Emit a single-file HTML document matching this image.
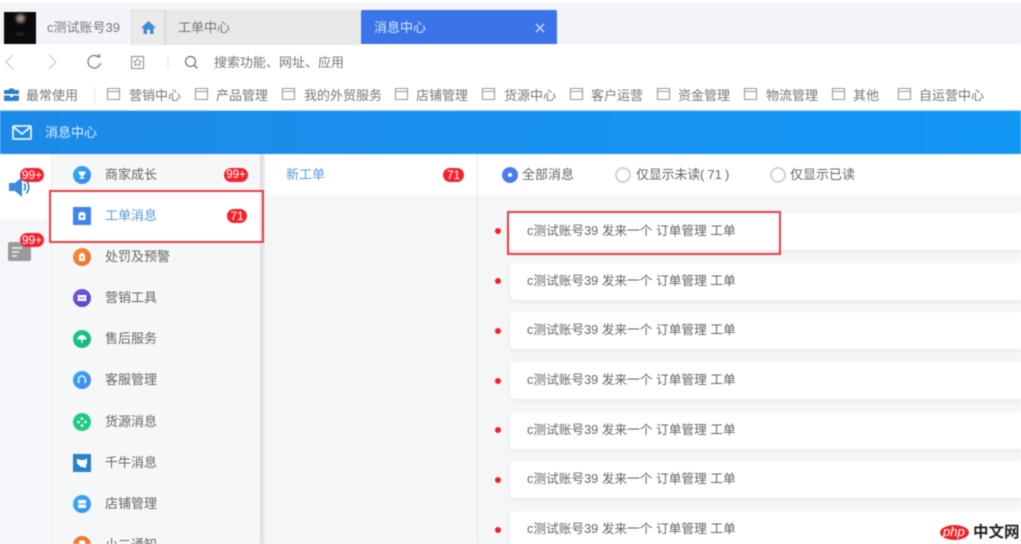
<!DOCTYPE html>
<html lang="zh">
<head>
<meta charset="utf-8">
<style>
html,body{margin:0;padding:0;background:#fff}
#p{position:relative;width:1021px;height:544px;overflow:hidden;background:#fff;font-family:"Liberation Sans","Noto Sans CJK SC",sans-serif;font-size:13px;color:#666;filter:blur(.45px)}
.a{position:absolute}
.t{position:absolute;white-space:nowrap;line-height:18px}
.bk{top:87px;color:#777;font-size:13px}
.m{position:absolute;left:105px;color:#666;font-size:13px;white-space:nowrap;line-height:18px}
.ic{position:absolute;left:73px;width:18px;height:18px;border-radius:50%}
.ic svg{position:absolute;left:0;top:0}
.bd{position:absolute;background:#f5222d;color:#fff;border-radius:8px;text-align:center;font-size:12px;line-height:14px;height:14px}
.card{position:absolute;left:510px;width:511px;height:37px;background:#fff;border-radius:4px 0 0 4px;box-shadow:0 2px 4px rgba(0,0,0,.06)}
.card span{position:absolute;left:17px;top:9px;font-size:12.7px;line-height:18px;color:#666;white-space:nowrap}
.dot{position:absolute;left:495px;width:6px;height:6px;border-radius:50%;background:#f5222d}
.r{position:absolute;top:167px;width:16px;height:16px;border:2px solid #d2d2d2;border-radius:50%;box-sizing:border-box;background:#fff}
</style>
</head>
<body>
<div id="p">
<div class="a" style="left:0;top:3px;width:1021px;height:41px;background:#f2f4f7"></div>
<div class="a" style="left:4px;top:12px;width:32px;height:32px;background:#0a0a0c"></div>
<div class="a" style="left:16px;top:14px;width:9px;height:9px;background:#a08f80;border-radius:50%;filter:blur(1.5px)"></div>
<div class="a" style="left:16px;top:33px;width:8px;height:2px;background:#333;filter:blur(1px)"></div>
<div class="t" style="left:47px;top:19px;font-size:13px;color:#777">c测试账号39</div>
<div class="a" style="left:131px;top:10px;width:34px;height:35px;background:#eaeaea;border:1px solid #ddd;border-bottom:0;box-sizing:border-box"></div>
<svg class="a" style="left:141px;top:20px" width="15" height="14" viewBox="0 0 15 14"><path d="M7.500 1 L15 8 H12.500 V14 H9 V9.500 H6 V14 H2.500 V8 H0 Z" fill="#3d8ad6"/></svg>
<div class="a" style="left:165px;top:10px;width:196px;height:35px;background:#e8e8e8;border-left:1px solid #d8d8d8;box-sizing:border-box"></div>
<div class="t" style="left:178px;top:19px;font-size:13px;color:#777">工单中心</div>
<div class="a" style="left:361px;top:10px;width:196px;height:34px;background:#3a74e8;border-radius:2px 2px 0 0"></div>
<div class="t" style="left:374px;top:19px;font-size:13px;color:#d9e6fb">消息中心</div>
<svg class="a" style="left:535px;top:23px" width="10" height="10" viewBox="0 0 10 10"><path d="M1 1 L9 9 M9 1 L1 9" stroke="#c8dafa" stroke-width="1.400"/></svg>

<svg class="a" style="left:0;top:50px" width="190" height="24" viewBox="0 0 190 24" fill="none">
<path d="M13 5 L6 12 L13 19" stroke="#c4c4c4" stroke-width="1"/>
<path d="M49 5 L56 12 L49 19" stroke="#c4c4c4" stroke-width="1"/>
<path d="M99 7.500 A6.300 6.300 0 1 0 100.500 13" stroke="#888" stroke-width="1.400"/>
<path d="M96 7 L100.500 7.800 L100 3.500" fill="#888"/>
<rect x="131.500" y="6.500" width="12" height="12" stroke="#888"/>
<path d="M137.500 8.500 L138.800 11 L141.300 11.300 L139.500 13 L140 15.500 L137.500 14.300 L135 15.500 L135.500 13 L133.700 11.300 L136.200 11 Z" stroke="#888" stroke-width=".8"/>
<path d="M168 6 V18" stroke="#e5e5e5"/>
</svg>
<svg class="a" style="left:184px;top:55px" width="15" height="15" viewBox="0 0 15 15" fill="none"><circle cx="6.500" cy="6.500" r="5" stroke="#777" stroke-width="1.300"/><path d="M10 10 L13.500 13.500" stroke="#777" stroke-width="1.300"/></svg>
<div class="t" style="left:214px;top:54px;font-size:13px;color:#777">搜索功能、网址、应用</div>

<svg class="a" style="left:4px;top:88px" width="15" height="13" viewBox="0 0 15 13"><path d="M5 2 V0.500 H10 V2 H14 a1 1 0 0 1 1 1 V6 H0 V3 a1 1 0 0 1 1 -1 Z M0 7.500 H6 V9 H9 V7.500 H15 V12 a1 1 0 0 1 -1 1 H1 a1 1 0 0 1 -1 -1 Z" fill="#2d80c8"/></svg>
<div class="t bk" style="left:26px">最常使用</div>
<div class="a" style="left:94px;top:86px;width:1px;height:16px;background:#e3e3e3"></div>
<div class="t bk" style="left:129px">营销中心</div>
<div class="t bk" style="left:216px">产品管理</div>
<div class="t bk" style="left:304px">我的外贸服务</div>
<div class="t bk" style="left:416px">店铺管理</div>
<div class="t bk" style="left:504px">货源中心</div>
<div class="t bk" style="left:591px">客户运营</div>
<div class="t bk" style="left:678px">资金管理</div>
<div class="t bk" style="left:766px">物流管理</div>
<div class="t bk" style="left:853px">其他</div>
<div class="t bk" style="left:919px">自运营中心</div>
<svg class="a" style="left:0;top:87px" width="1021" height="14" viewBox="0 0 1021 14" fill="none" stroke="#999" stroke-width="1.100">
<path d="M107.500 1.500 H119.500 V12.500 H107.500 Z M107.500 4.500 H119.500"/>
<path d="M195.500 1.500 H207.500 V12.500 H195.500 Z M195.500 4.500 H207.500"/>
<path d="M282.500 1.500 H294.500 V12.500 H282.500 Z M282.500 4.500 H294.500"/>
<path d="M395.500 1.500 H407.500 V12.500 H395.500 Z M395.500 4.500 H407.500"/>
<path d="M482.500 1.500 H494.500 V12.500 H482.500 Z M482.500 4.500 H494.500"/>
<path d="M570.500 1.500 H582.500 V12.500 H570.500 Z M570.500 4.500 H582.500"/>
<path d="M657.500 1.500 H669.500 V12.500 H657.500 Z M657.500 4.500 H669.500"/>
<path d="M744.500 1.500 H756.500 V12.500 H744.500 Z M744.500 4.500 H756.500"/>
<path d="M832.500 1.500 H844.500 V12.500 H832.500 Z M832.500 4.500 H844.500"/>
<path d="M898.500 1.500 H910.500 V12.500 H898.500 Z M898.500 4.500 H910.500"/>
</svg>

<div class="a" style="left:0;top:110px;width:1021px;height:44px;background:linear-gradient(90deg,#1e8ae8,#1297f5);border-top:1px solid #a9d6f7;box-sizing:border-box"></div>
<svg class="a" style="left:12px;top:125px" width="20" height="15" viewBox="0 0 20 15" fill="none" stroke="#e8f4fe" stroke-width="1.800"><rect x="1" y="1" width="18" height="13" rx="1"/><path d="M1.500 2 L10 9 L18.500 2"/></svg>
<div class="t" style="left:45px;top:124px;font-size:13px;color:#dcefff">消息中心</div>

<div class="a" style="left:0;top:154px;width:51px;height:390px;background:#f5f6f9"></div>
<div class="a" style="left:0;top:154px;width:51px;height:65px;background:#fff"></div>
<div class="a" style="left:51px;top:154px;width:209px;height:390px;background:#f6f7f9;border-left:1px solid #eceef1;box-sizing:border-box"></div>
<div class="a" style="left:52px;top:192px;width:209px;height:50px;background:#fff"></div>
<div class="a" style="left:260px;top:154px;width:5px;height:390px;background:linear-gradient(90deg,#dcdcdf,#ececee)"></div>
<div class="a" style="left:265px;top:154px;width:212px;height:390px;background:#f5f6f8"></div>
<div class="a" style="left:265px;top:154px;width:212px;height:41px;background:#fff"></div>
<div class="a" style="left:477px;top:154px;width:544px;height:390px;background:#f5f6f8;border-left:1px solid #e6e7ea;box-sizing:border-box"></div>
<div class="a" style="left:478px;top:154px;width:543px;height:41px;background:#fff"></div>

<svg class="a" style="left:8px;top:177px" width="23" height="20" viewBox="0 0 23 20"><path d="M1 6 H7 L14 0 V20 L7 14 H1 Z" fill="#3b8ad6"/><path d="M16 6.500 Q18.500 10 16 13.500 M18.500 3.500 Q23 10 18.500 16.500" stroke="#3b8ad6" stroke-width="1.700" fill="none"/></svg>
<div class="bd" style="left:20px;top:168px;width:24px">99+</div>
<div class="a" style="left:8px;top:242px;width:23px;height:19px;background:#9a9a9a;border-radius:2px"></div>
<div class="a" style="left:12px;top:247px;width:10px;height:2px;background:#ddd"></div>
<div class="a" style="left:12px;top:251px;width:7px;height:2px;background:#ddd"></div>
<div class="a" style="left:12px;top:255px;width:5px;height:2px;background:#ddd"></div>
<div class="bd" style="left:20px;top:233px;width:24px">99+</div>

<div class="ic" style="top:166px;background:linear-gradient(135deg,#2eb6ea,#3a80f0)"><svg width="18" height="18" viewBox="0 0 18 18"><path d="M5 5.500 H13 L11 9.500 H9.800 V11.500 H11.500 V12.800 H6.500 V11.500 H8.200 V9.500 H7 Z" fill="#fff"/></svg></div>
<div class="m" style="top:166px">商家成长</div>
<div class="bd" style="left:224px;top:168px;width:24px;font-size:11.500px">99+</div>
<div class="ic" style="top:207px;border-radius:0;background:#3f86ee"><svg width="18" height="18" viewBox="0 0 18 18"><path d="M5.500 6 H7 V5 H11 V6 H12.500 V13 H5.500 Z" fill="#fff"/><rect x="7.500" y="8.500" width="3" height="2" fill="#3f86ee"/></svg></div>
<div class="m" style="top:207px;color:#5b96e0">工单消息</div>
<div class="bd" style="left:227px;top:209px;width:20px">71</div>
<div class="ic" style="top:248px;background:linear-gradient(135deg,#f0963a,#ee6a30)"><svg width="18" height="18" viewBox="0 0 18 18"><path d="M6 7 L9 4.500 L12 7 V13 H6 Z" fill="#fff"/><rect x="8" y="8.500" width="2" height="2" fill="#ee7a30"/></svg></div>
<div class="m" style="top:248px">处罚及预警</div>
<div class="ic" style="top:289px;background:linear-gradient(135deg,#7b55dc,#4f45c8)"><svg width="18" height="18" viewBox="0 0 18 18"><path d="M4.500 6 H13.500 V8 L12.500 9 L13.500 10 V12 H4.500 V10 L5.500 9 L4.500 8 Z" fill="#fff"/><rect x="7" y="8.300" width="1.500" height="1.500" fill="#6a4cd4"/><rect x="9.500" y="8.300" width="1.500" height="1.500" fill="#6a4cd4"/></svg></div>
<div class="m" style="top:289px">营销工具</div>
<div class="ic" style="top:330px;background:linear-gradient(135deg,#20c880,#18b87e)"><svg width="18" height="18" viewBox="0 0 18 18"><path d="M4.500 9.500 A4.500 4.500 0 0 1 13.500 9.500 Z" fill="#fff"/><path d="M9 9 V13" stroke="#fff" stroke-width="1.200"/></svg></div>
<div class="m" style="top:330px">售后服务</div>
<div class="ic" style="top:371px;background:linear-gradient(135deg,#2eb0f0,#4a80f0)"><svg width="18" height="18" viewBox="0 0 18 18" fill="none"><path d="M5.500 10.500 V8.500 A3.500 3.500 0 0 1 12.500 8.500 V10.500" stroke="#fff" stroke-width="1.200"/><rect x="5" y="9.500" width="1.500" height="2.500" fill="#fff"/><rect x="11.500" y="9.500" width="1.500" height="2.500" fill="#fff"/></svg></div>
<div class="m" style="top:371px">客服管理</div>
<div class="ic" style="top:413px;background:#1fcb85"><svg width="18" height="18" viewBox="0 0 18 18" fill="#fff"><circle cx="9" cy="5.500" r="1.300"/><circle cx="9" cy="12.500" r="1.300"/><circle cx="5.500" cy="9" r="1.300"/><circle cx="12.500" cy="9" r="1.300"/></svg></div>
<div class="m" style="top:413px">货源消息</div>
<div class="ic" style="top:454px;border-radius:0;background:#2a82c8"><svg width="18" height="18" viewBox="0 0 18 18"><path d="M4 4.500 L7 6 H11 L14 4.500 V9.500 L11.500 13 H8 L4 9.500 Z" fill="#fff"/><circle cx="11.500" cy="12" r="1.800" fill="#fff"/></svg></div>
<div class="m" style="top:454px">千牛消息</div>
<div class="ic" style="top:495px;background:linear-gradient(135deg,#2fb4f2,#3f8ef0)"><svg width="18" height="18" viewBox="0 0 18 18" fill="#fff"><rect x="5" y="5" width="8" height="3.500" rx=".5"/><rect x="5" y="9.500" width="8" height="3.500" rx=".5"/></svg></div>
<div class="m" style="top:495px">店铺管理</div>
<div class="ic" style="top:536px;background:#f07a30"><svg width="18" height="18" viewBox="0 0 18 18"><rect x="6" y="4.500" width="6" height="7" rx="1" fill="#fff"/></svg></div>
<div class="m" style="top:536px">小二通知</div>

<div class="t" style="left:286px;top:166px;font-size:13px;color:#5f9ade">新工单</div>
<div class="bd" style="left:443px;top:168px;width:21px">71</div>

<div class="a" style="left:502px;top:167px;width:16px;height:16px;border-radius:50%;background:#4a7cf0"></div>
<div class="a" style="left:508px;top:173px;width:4px;height:4px;border-radius:50%;background:#fff"></div>
<div class="t" style="left:522px;top:166px;font-size:13px;color:#666">全部消息</div>
<div class="r" style="left:615px"></div>
<div class="t" style="left:636px;top:166px;font-size:13px;letter-spacing:-.2px;color:#666">仅显示未读( 71 )</div>
<div class="r" style="left:770px"></div>
<div class="t" style="left:790px;top:166px;font-size:13px;color:#666">仅显示已读</div>

<div class="dot" style="top:228px"></div><div class="card" style="top:213px"><span>c测试账号39 发来一个 订单管理 工单</span></div>
<div class="dot" style="top:278px"></div><div class="card" style="top:263px"><span>c测试账号39 发来一个 订单管理 工单</span></div>
<div class="dot" style="top:328px"></div><div class="card" style="top:312px"><span>c测试账号39 发来一个 订单管理 工单</span></div>
<div class="dot" style="top:378px"></div><div class="card" style="top:362px"><span>c测试账号39 发来一个 订单管理 工单</span></div>
<div class="dot" style="top:427px"></div><div class="card" style="top:412px"><span>c测试账号39 发来一个 订单管理 工单</span></div>
<div class="dot" style="top:477px"></div><div class="card" style="top:461px"><span>c测试账号39 发来一个 订单管理 工单</span></div>
<div class="dot" style="top:527px"></div><div class="card" style="top:511px;height:40px"><span>c测试账号39 发来一个 订单管理 工单</span></div>

<div class="a" style="left:49px;top:190px;width:215px;height:53px;border:2px solid #ea3f45;box-sizing:border-box"></div>
<div class="a" style="left:507px;top:211px;width:274px;height:44px;border:2px solid #ea3f45;box-sizing:border-box"></div>

<div class="a" style="left:940px;top:525px;width:29px;height:15px;border-radius:50%;background:#e8262a"></div>
<div class="t" style="left:943px;top:523px;font-size:13px;font-style:italic;color:#fff">php</div>
<div class="t" style="left:973px;top:524px;font-size:15.500px;font-weight:bold;color:#222">中文网</div>
</div>
</body>
</html>
